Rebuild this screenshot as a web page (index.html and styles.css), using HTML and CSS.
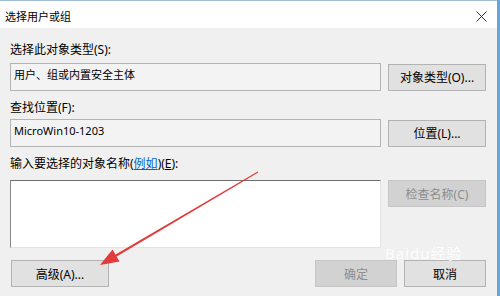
FILE: index.html
```html
<!DOCTYPE html>
<html lang="zh-CN">

<head>
  <meta charset="UTF-8">
  <title>选择用户或组</title>
  <link rel="stylesheet" href="styles.css">
</head>

<body>
  <div class="dialog">
    <!-- title bar -->
    <div class="titlebar">
      <span class="title">选择用户或组</span>
      <span class="close">
        <svg width="11" height="11" viewBox="0 0 11 11">
          <path d="M0.5 0.5 L10.5 10.5 M10.5 0.5 L0.5 10.5" stroke="#333" stroke-width="1" fill="none" />
        </svg>
      </span>
    </div>

    <div class="content">
      <div class="label first">选择此对象类型(S):</div>
      <div class="row">
        <div class="field readonly">用户、组或内置安全主体</div>
        <button class="button">对象类型(O)...</button>
      </div>

      <div class="label second">查找位置(F):</div>
      <div class="row">
        <div class="field readonly">MicroWin10-1203</div>
        <button class="button">位置(L)...</button>
      </div>

      <div class="label third">输入要选择的对象名称(<a href="#" class="link">例如</a>)(<u>E</u>):</div>
      <div class="row top">
        <div class="field names"></div>
        <button class="button disabled">检查名称(C)</button>
      </div>

      <div class="footer">
        <button class="button">高级(A)...</button>
        <div class="footer-right">
          <button class="button small disabled">确定</button>
          <button class="button small">取消</button>
        </div>
      </div>
    </div>
  </div>

  <!-- red pointer arrow drawn over the dialog -->
  <svg class="arrow" width="500" height="296" viewBox="0 0 500 296">
    <polygon points="258.3,172.4 257.7,171.6 114.3,255.3 116.7,256.5" fill="#e23b3b" />
    <polygon points="100,265 119.5,261.6 112.5,249.6" fill="#e23b3b" />
  </svg>

  <div class="watermark">Baidu经验</div>
</body>

</html>
```

FILE: styles.css
```css
body {
  margin: 0;
  padding: 0;
  width: 500px;
  height: 296px;
  overflow: hidden;
  background-color: #f0f0f0;
  font-family: "Noto Sans", "Noto Sans CJK SC", sans-serif;
  font-size: 12px;
  color: #000;
  position: relative;
}

.dialog {
  width: 497px;
  height: 296px;
  border-right: 3px solid #6aa3d6;
  background-color: #f0f0f0;
}

.titlebar {
  height: 28px;
  background-color: #ffffff;
  border-top: 1px solid #9fbcd6;
  box-sizing: border-box;
  display: flex;
  align-items: center;
  justify-content: space-between;
  padding: 3px 10px 0 5px;
}

.title {
  font-size: 11px;
}

.close {
  display: flex;
}

.content {
  padding: 14px 11px 0 10px;
}

.label {
  height: 16px;
  line-height: 16px;
}

.label.first {
  margin-bottom: 5px;
}

.label.second {
  margin-top: 9px;
  margin-bottom: 3px;
}

.label.third {
  margin-top: 9px;
  margin-bottom: 8px;
}

.link {
  color: #0066cc;
  text-decoration: underline;
}

.row {
  display: flex;
  align-items: center;
  gap: 7px;
}

.row.top {
  align-items: flex-start;
}

.field {
  width: 371px;
  box-sizing: border-box;
  border: 1px solid #b4b4b4;
}

.field.readonly {
  height: 28px;
  line-height: 22px;
  padding: 0 3px;
  background-color: #f3f3f3;
  font-size: 11px;
}

.field.names {
  height: 68px;
  background-color: #ffffff;
  border-top: 1px solid #6e6e6e;
  border-left: 1px solid #8a8a8a;
  border-right: 1px solid #e3e3e3;
  border-bottom: 1px solid #e3e3e3;
}

.button {
  width: 98px;
  height: 27px;
  box-sizing: border-box;
  background-color: #e1e1e1;
  border: 1px solid #b3b3b3;
  font-family: inherit;
  font-size: 12px;
  color: #000;
  padding: 0;
}

.button.disabled {
  background-color: #d2d2d2;
  border-color: #c6c6c6;
  color: #8d8d8d;
}

.button.small {
  width: 82px;
}

.footer {
  display: flex;
  justify-content: space-between;
  margin-top: 12px;
  padding-left: 1px;
}

.footer-right {
  display: flex;
  gap: 7px;
}

.arrow {
  position: absolute;
  left: 0;
  top: 0;
  pointer-events: none;
}

.watermark {
  position: absolute;
  left: 385px;
  top: 246px;
  font-size: 15px;
  line-height: 14px;
  white-space: nowrap;
  color: rgba(255, 255, 255, 0.85);
  letter-spacing: 1px;
  pointer-events: none;
}
```
